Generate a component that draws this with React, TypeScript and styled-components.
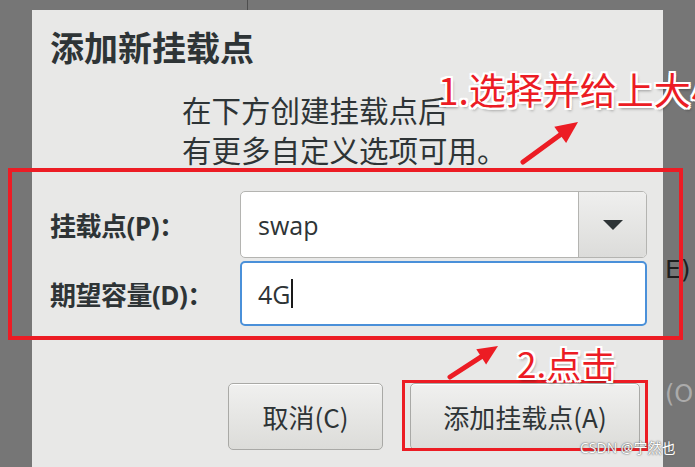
import React from "react";
import styled, { createGlobalStyle } from "styled-components";

const uiFont = `"Open Sans", "Noto Sans CJK SC", sans-serif`;
const cjkFont = `"Noto Sans CJK SC", "Open Sans", sans-serif`;
const red = "#ec1c24";

const GlobalStyle = createGlobalStyle`
  html, body {
    margin: 0;
    padding: 0;
  }
  body {
    background: #767676;
    font-family: ${uiFont};
  }
`;

const Screen = styled("div")`
  position: relative;
  width: 695px;
  height: 467px;
  overflow: hidden;
  background: #767676;
  display: flex;
  flex-direction: column;
`;

const TopStrip = styled("div")`
  flex: none;
  height: 10px;
  padding-left: 247px;
`;

const Divider = styled("div")`
  width: 1px;
  height: 100%;
  background: #4e4e4e;
`;

const Body = styled("div")`
  flex: 1;
  display: flex;
  min-height: 0;
`;

const Gutter = styled("div")`
  flex: none;
  width: 32px;
`;

const SideStrip = styled("div")`
  flex: none;
  width: 32px;
  overflow: hidden;
  display: flex;
  flex-direction: column;
  padding: 244px 0 0 2px;
  box-sizing: border-box;
`;

const SideText = styled("div")`
  font-family: "DejaVu Sans", sans-serif;
  font-size: ${(props) => (props.dim ? 24 : 25)}px;
  line-height: 32px;
  white-space: nowrap;
  color: ${(props) => (props.dim ? "#ababab" : "#1e1e1e")};
  margin-top: ${(props) => props.offset || 0}px;
  margin-left: ${(props) => props.shift || 0}px;
`;

const Dialog = styled("div")`
  flex: none;
  width: 631px;
  background: #e8e8e7;
  padding: 17px 16px 0 18px;
  box-sizing: border-box;
  color: #2e3436;
  display: flex;
  flex-direction: column;
`;

const Title = styled("h1")`
  margin: 0;
  font-family: ${cjkFont};
  font-size: 34px;
  font-weight: 700;
  line-height: 40px;
  color: #2e3436;
`;

const Description = styled("p")`
  margin: 22px 0 0 132px;
  font-family: ${cjkFont};
  font-size: 29.5px;
  line-height: 40px;
  color: #2e3436;
`;

const Form = styled("div")`
  display: grid;
  grid-template-columns: 190px 1fr;
  grid-template-rows: 67px 65px;
  row-gap: 3px;
  margin-top: 22px;
`;

const Label = styled("div")`
  display: flex;
  align-items: center;
  font-size: 26px;
  font-weight: 700;
  letter-spacing: -0.5px;
  white-space: nowrap;
  color: #2e3436;
`;

const Combo = styled("div")`
  display: flex;
  background: #fff;
  border: 1px solid #b4b4b1;
  border-radius: 5px;
  overflow: hidden;
`;

const ComboText = styled("div")`
  flex: 1;
  display: flex;
  align-items: center;
  padding-left: 17px;
  font-size: 25px;
  color: #2e3436;
`;

const ComboButton = styled("div")`
  flex: none;
  width: 67px;
  display: flex;
  align-items: center;
  justify-content: center;
  border-left: 1px solid #b4b4b1;
  background: linear-gradient(#efefee, #dcdcda);
`;

const Caret = styled("div")`
  width: 0;
  height: 0;
  border-left: 10px solid transparent;
  border-right: 10px solid transparent;
  border-top: 10px solid #2e3436;
`;

const Entry = styled("div")`
  display: flex;
  align-items: center;
  background: #fff;
  border: 2px solid #4a90d9;
  border-radius: 5px;
  padding-left: 16px;
  font-size: 25px;
  color: #2e3436;
`;

const Cursor = styled("span")`
  display: inline-block;
  width: 1.5px;
  height: 29px;
  margin-left: 1px;
  background: #1a1a1a;
`;

const Actions = styled("div")`
  display: flex;
  gap: 27px;
  margin: 57px 0 0 178px;
`;

const Button = styled("div")`
  width: ${(props) => props.width}px;
  height: 67px;
  box-sizing: border-box;
  display: flex;
  align-items: center;
  justify-content: center;
  border: 1px solid #a9a9a6;
  border-radius: 5px;
  background: linear-gradient(#f0f0ef, #dcdcd9);
  box-shadow: inset 0 1px 0 #fff;
  font-family: ${cjkFont};
  font-size: 26px;
  color: #2e3436;
  white-space: nowrap;
`;

const RedBox = styled("div")`
  position: absolute;
  left: ${(props) => props.x}px;
  top: ${(props) => props.y}px;
  width: ${(props) => props.w}px;
  height: ${(props) => props.h}px;
  border: ${(props) => props.stroke}px solid ${red};
  box-sizing: border-box;
  pointer-events: none;
`;

const Note = styled("div")`
  position: absolute;
  left: ${(props) => props.x}px;
  top: ${(props) => props.y}px;
  font-family: ${cjkFont};
  font-size: ${(props) => props.size}px;
  line-height: 1;
  white-space: nowrap;
  color: ${red};
  text-shadow: -2px 0 0 #fff, 2px 0 0 #fff, 0 -2px 0 #fff, 0 2px 0 #fff,
    -2px -2px 0 #fff, 2px 2px 0 #fff, -2px 2px 0 #fff, 2px -2px 0 #fff,
    2px 3px 3px rgba(0, 0, 0, 0.35);
`;

const Watermark = styled("div")`
  position: absolute;
  left: 580px;
  top: 441px;
  font-family: ${uiFont};
  font-size: 14px;
  line-height: 1;
  white-space: nowrap;
  color: #fff;
  text-shadow: 0 0 2px #666, 0 0 1px #666;
`;

const ArrowLayer = styled("svg")`
  position: absolute;
  left: 0;
  top: 0;
  pointer-events: none;
`;

const App = () => {
  return (
    <>
      <GlobalStyle />
      <Screen>
        <TopStrip>
          <Divider />
        </TopStrip>
        <Body>
          <Gutter />
          <Dialog>
            <Title>添加新挂载点</Title>
            <Description>
              在下方创建挂载点后
              <br />
              有更多自定义选项可用。
            </Description>
            <Form>
              <Label>挂载点(P)：</Label>
              <Combo>
                <ComboText>swap</ComboText>
                <ComboButton>
                  <Caret />
                </ComboButton>
              </Combo>
              <Label>期望容量(D)：</Label>
              <Entry>
                4G
                <Cursor />
              </Entry>
            </Form>
            <Actions>
              <Button width={155}>取消(C)</Button>
              <Button width={230}>添加挂载点(A)</Button>
            </Actions>
          </Dialog>
          <SideStrip>
            <SideText>E)</SideText>
            <SideText dim offset={92}>
              (O
            </SideText>
          </SideStrip>
        </Body>

        <RedBox x={8} y={168} w={675} h={172} stroke={4} />
        <RedBox x={402} y={380} w={246} h={71} stroke={3} />

        <ArrowLayer width="695" height="467" viewBox="0 0 695 467">
          <line x1="523" y1="162" x2="562" y2="133.5" stroke={red} strokeWidth="5" strokeLinecap="round" />
          <polygon points="578,122 566.1,143 554.3,126.8" fill={red} />
          <line x1="450" y1="377" x2="483" y2="355.7" stroke={red} strokeWidth="5" strokeLinecap="round" />
          <polygon points="498,346 486.1,364.5 476.3,349.3" fill={red} />
        </ArrowLayer>

        <Note x={438} y={71} size={37}>1.选择并给上大小</Note>
        <Note x={517} y={345} size={35}>2.点击</Note>
        <Watermark>CSDN @宁然也</Watermark>
      </Screen>
    </>
  );
};

export default App;
